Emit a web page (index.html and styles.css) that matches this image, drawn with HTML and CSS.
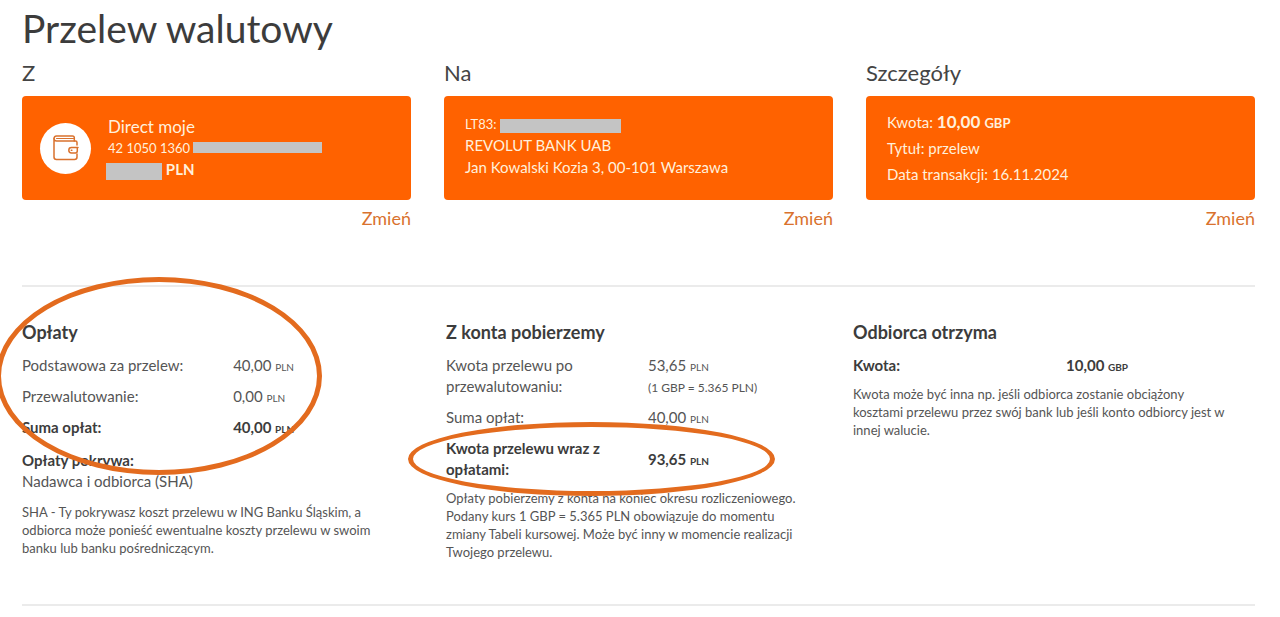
FILE: index.html
```
<!DOCTYPE html>
<html lang="pl">
<head>
    <meta charset="UTF-8">
    <title>Przelew walutowy</title>
    <link rel="stylesheet" href="styles.css">
</head>
<body>
    <main class="page">
        <h1>Przelew walutowy</h1>

        <div class="cards">
            <section>
                <h2>Z</h2>
                <div class="card">
                    <div class="card-icon">
                        <svg width="26" height="26" viewBox="0 0 26 26" fill="none" stroke="#d9722e" stroke-width="1.5" stroke-linecap="round" stroke-linejoin="round">
                            <path d="M24 10V7.500q0-1.500-1.500-1.500H3.500Q1 6 1 3.800V22q0 2.500 2.500 2.500h18q2.500 0 2.500-2.500v-3"/>
                            <path d="M1 3.800Q1 1 3.500 1h16q1.800 0 1.800 1.800V6"/>
                            <path stroke-width="1" d="M3.500 3.500h17"/>
                            <path d="M25 12.500h-6.500a2.700 2.700 0 0 0 0 5.400h4q1.800 0 1.800-1.800v-3.500"/>
                            <path d="M18.300 15.200h.6"/>
                        </svg>
                    </div>
                    <div class="card-text">
                        <p class="name">Direct moje</p>
                        <p class="number">42 1050 1360 <span class="mask mask-account"></span></p>
                        <p class="balance"><span class="mask mask-balance"></span> <b>PLN</b></p>
                    </div>
                </div>
                <a class="change" href="#">Zmień</a>
            </section>

            <section>
                <h2>Na</h2>
                <div class="card recipient">
                    <div class="card-text">
                        <p class="number">LT83: <span class="mask mask-iban"></span></p>
                        <p>REVOLUT BANK UAB</p>
                        <p>Jan Kowalski Kozia 3, 00-101 Warszawa</p>
                    </div>
                </div>
                <a class="change" href="#">Zmień</a>
            </section>

            <section>
                <h2>Szczegóły</h2>
                <div class="card">
                    <div class="card-text details">
                        <p>Kwota: <b class="amount">10,00 <small>GBP</small></b></p>
                        <p>Tytuł: przelew</p>
                        <p>Data transakcji: 16.11.2024</p>
                    </div>
                </div>
                <a class="change" href="#">Zmień</a>
            </section>
        </div>

        <div class="summary">
            <section class="column">
                <h3>Opłaty</h3>
                <table>
                    <tr><th>Podstawowa za przelew:</th><td>40,00 <small>PLN</small></td></tr>
                    <tr><th>Przewalutowanie:</th><td>0,00 <small>PLN</small></td></tr>
                    <tr class="total"><th>Suma opłat:</th><td>40,00 <small>PLN</small></td></tr>
                </table>
                <p class="payer"><b>Opłaty pokrywa:</b><br>Nadawca i odbiorca (SHA)</p>
                <p class="note">SHA - Ty pokrywasz koszt przelewu w ING Banku Śląskim, a odbiorca może ponieść ewentualne koszty przelewu w swoim banku lub banku pośredniczącym.</p>
                <span class="ring ring-fees"></span>
            </section>

            <section class="column">
                <h3>Z konta pobierzemy</h3>
                <table>
                    <tr><th>Kwota przelewu po przewalutowaniu:</th><td>53,65 <small>PLN</small><br><span class="rate">(1 GBP = 5.365 PLN)</span></td></tr>
                    <tr><th>Suma opłat:</th><td>40,00 <small>PLN</small></td></tr>
                    <tr class="total"><th>Kwota przelewu wraz z opłatami:</th><td>93,65 <small>PLN</small></td></tr>
                </table>
                <p class="note">Opłaty pobierzemy z konta na koniec okresu rozliczeniowego. Podany kurs 1 GBP = 5.365 PLN obowiązuje do momentu zmiany Tabeli kursowej. Może być inny w momencie realizacji Twojego przelewu.</p>
                <span class="ring ring-total"></span>
            </section>

            <section class="column received">
                <h3>Odbiorca otrzyma</h3>
                <table>
                    <tr class="total"><th>Kwota:</th><td>10,00 <small>GBP</small></td></tr>
                </table>
                <p class="note">Kwota może być inna np. jeśli odbiorca zostanie obciążony kosztami przelewu przez swój bank lub jeśli konto odbiorcy jest w innej walucie.</p>
            </section>
        </div>
    </main>
</body>
</html>
```

FILE: styles.css
```
* {
    box-sizing: border-box;
}

body {
    margin: 0;
    background: #fff;
    color: #555;
    font-family: Lato, "Open Sans", sans-serif;
    font-size: 15px;
    line-height: 22px;
    overflow-x: hidden;
}

h1, h2, h3, p {
    margin: 0;
}

.page {
    padding: 4px 25px 0 22px;
}

h1 {
    color: #3c3c3c;
    font-size: 39px;
    font-weight: 400;
    line-height: 48px;
}

/* transfer cards */
.cards {
    display: grid;
    grid-template-columns: repeat(3, 1fr);
    gap: 33px;
    padding-top: 8px;
}

h2 {
    margin-bottom: 10px;
    color: #444;
    font-size: 22px;
    font-weight: 400;
    line-height: 26px;
}

.card {
    display: flex;
    align-items: center;
    min-height: 104px;
    padding: 0 18px;
    border-radius: 4px;
    background: #ff6200;
    color: #fff0dc;
}

.recipient {
    padding-bottom: 4px;
}

.card-icon {
    display: flex;
    align-items: center;
    justify-content: center;
    flex: none;
    width: 51px;
    height: 51px;
    margin-right: 14px;
    border-radius: 50%;
    background: #fff;
}

.card-text {
    padding-left: 3px;
}

.name {
    font-size: 17px;
}

.number {
    font-size: 13px;
    line-height: 20px;
}

.details p {
    line-height: 26px;
}

.amount {
    font-size: 17px;
}

.mask {
    display: inline-block;
    background: #c4c4c4;
    vertical-align: middle;
}

.mask-account {
    width: 129px;
    height: 11px;
    vertical-align: baseline;
}

.mask-balance {
    width: 56px;
    height: 17px;
    margin-left: -2px;
}

.mask-iban {
    width: 121px;
    height: 14px;
}

.change {
    display: block;
    width: fit-content;
    margin: 7px 0 0 auto;
    color: #d9722e;
    font-size: 18px;
    text-decoration: none;
}

/* cost summary */
.summary {
    display: grid;
    grid-template-columns: 391fr 374fr 402fr;
    gap: 33px;
    margin-top: 56px;
    padding: 34px 0 43px;
    border-top: 2px solid #ebebeb;
    border-bottom: 2px solid #ebebeb;
    line-height: 21px;
}

.column {
    position: relative;
}

h3 {
    margin-bottom: 7px;
    color: #3c3c3c;
    font-size: 18px;
    font-weight: 700;
    line-height: 22px;
}

table {
    width: 100%;
    border-collapse: collapse;
}

th, td {
    padding: 5px 0;
    font-weight: 400;
    text-align: left;
}

th {
    width: 54%;
    padding-right: 20px;
}

.received th {
    width: 53%;
}

small {
    font-size: 10px;
    line-height: 1;
}

.amount small {
    font-size: 13px;
}

.rate {
    font-size: 12px;
    line-height: 1;
}

.total, .payer b {
    color: #3c3c3c;
}

.total th, .total td {
    font-weight: 700;
}

.payer {
    padding: 7px 0;
}

.note {
    max-width: 364px;
    margin-top: 4px;
    font-size: 13px;
    line-height: 18px;
}

.received .note {
    max-width: 380px;
}

/* hand-drawn style highlights over the fees and the total */
.ring {
    position: absolute;
    border: 5px solid #e36b1e;
    border-radius: 50%;
    pointer-events: none;
}

.ring-fees {
    top: -44px;
    left: -26px;
    width: 326px;
    height: 198px;
}

.ring-total {
    top: 101px;
    left: -38px;
    width: 367px;
    height: 74px;
}
```
